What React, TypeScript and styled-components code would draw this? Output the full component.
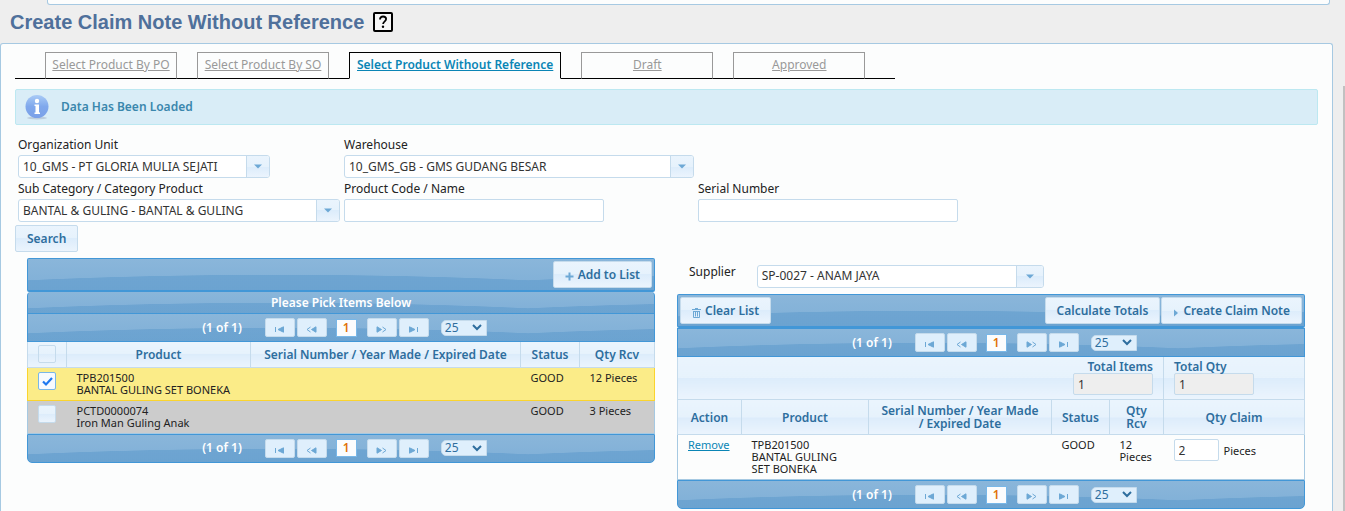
import React, { useState } from "react";
import styled, { createGlobalStyle, css } from "styled-components";

const Global = createGlobalStyle`
  *, *::before, *::after { box-sizing: border-box; }
  html { background: #eeeeee; }
  body {
    margin: 0;
    background: #eeeeee;
    color: #222222;
    font-family: "Noto Sans", "Open Sans", sans-serif;
    font-size: 12px;
    line-height: 16px;
  }
  button, input, select { font: inherit; color: inherit; margin: 0; }
`;

const glass = css`
  background: linear-gradient(#eaf4fd 0, #e6f2fc 50%, #dcecfb 50%, #ebf4fd 100%);
`;

const wave = css`
  background:
    radial-gradient(ellipse 600px 60px at 250px calc(50% + 60px), rgba(84, 148, 200, 0.45) 99%, transparent 100%) 0 0 / 500px 100%,
    linear-gradient(#8ab6da, #7fafd7);
`;

const Shell = styled.div`
  display: grid;
  grid-template-columns: minmax(0, 1fr) 2px;
  column-gap: 10px;
  min-height: 100vh;
`;

const Page = styled.div`
  display: flex;
  flex-direction: column;
`;

const ScrollTrack = styled.div`
  padding-top: 86px;
  display: flex;
  &::before { content: ""; flex: 1; background: #c1c1c1; }
`;

const MenuPanel = styled.div`
  height: 5px;
  margin: 0 3px 0 47px;
  background: #fcfdfd;
  border: 1px solid #a6c9e2;
  border-top: 0;
  border-radius: 0 0 3px 3px;
`;

const TitleBar = styled.header`
  display: flex;
  align-items: center;
  gap: 9px;
  height: 38px;
  padding: 0 10px 5px;
`;

const Title = styled.h1`
  margin: 0;
  font: bold 20px/24px "Liberation Sans", Arial, sans-serif;
  color: #4f709b;
`;

const Panel = styled.main`
  flex: 1;
  padding: 8px 14px 0;
  background: #fcfdfd;
  border: 1px solid #a6c9e2;
  border-bottom: 0;
  border-radius: 3px 3px 0 0;
`;

const Tabs = styled.nav`
  display: flex;
  gap: 20px;
  width: max-content;
  padding: 0 30px;
  box-shadow: inset 0 -1px #000000;
`;

const Tab = styled.a<{ $active?: boolean }>`
  min-width: 132px;
  height: 27px;
  padding: 4px ${(p) => (p.$active ? 7 : 6)}px;
  text-align: center;
  border: 1px solid ${(p) => (p.$active ? "#000000" : "#999999")};
  border-bottom-color: ${(p) => (p.$active ? "#fcfdfd" : "#000000")};
  color: ${(p) => (p.$active ? "#0a85b5" : "#999999")};
  font-weight: ${(p) => (p.$active ? 600 : 400)};
`;

const Message = styled.div`
  display: flex;
  align-items: center;
  gap: 12px;
  height: 36px;
  margin-top: 10px;
  padding: 0 9px;
  background: #d9edf7;
  border: 1px solid #bce8f1;
  border-radius: 2px;
  color: #3a87ad;
  font-weight: 600;
`;

const Filters = styled.form`
  margin-top: 10px;
`;

const FilterGrid = styled.div`
  display: grid;
  grid-template-columns: 322px 350px 260px;
  column-gap: 4px;
  margin-bottom: 2px;
  padding-left: 3px;
`;

const Field = styled.div`
  display: flex;
  flex-direction: column;
  padding-bottom: 1px;
  label { line-height: 20px; }
`;

const TextBox = styled.input<{ $w: number }>`
  width: ${(p) => p.$w}px;
  height: 23px;
  padding: 0 4px;
  background: #ffffff;
  border: 1px solid #c5dbec;
  border-radius: 2px;
  color: #333333;
  &:read-only { background: #eeeeee; }
`;

const Combo = styled.span<{ $w: number }>`
  display: flex;
  width: ${(p) => p.$w}px;
  height: 23px;
  border: 1px solid #c5dbec;
  border-radius: 3px;
  background: #ffffff;
  overflow: hidden;
  select {
    flex: 1;
    min-width: 0;
    padding: 0 4px;
    appearance: none;
    border: 0;
    background: transparent;
    color: #333333;
  }
`;

const ComboTrigger = styled.span<{ $wide?: boolean }>`
  display: grid;
  place-items: center;
  width: ${(p) => (p.$wide ? 27 : 23)}px;
  border-left: 1px solid #c5dbec;
  ${glass}
`;

const Button = styled.button`
  display: inline-flex;
  align-items: center;
  gap: 4px;
  height: 27px;
  padding: 0 11px;
  border: 1px solid #c5dbec;
  border-radius: 2px;
  color: #2e6e9e;
  font-weight: 600;
  white-space: nowrap;
  ${glass}
  svg { margin-top: 4px; }
`;

const Columns = styled.div`
  display: grid;
  grid-template-columns: 1fr 1fr;
  column-gap: 22px;
  align-items: start;
  margin: 6px 13px 0 12px;
`;

const Toolbar = styled.div`
  display: flex;
  align-items: center;
  gap: 1px;
  height: 34px;
  padding: 0 2px;
  border: 1px solid #4297d7;
  border-bottom-width: 2px;
  border-radius: 2px;
  ${wave}
`;

const Spacer = styled.span`
  flex: 1;
`;

const Caption = styled.div`
  height: 21px;
  line-height: 21px;
  border: 1px solid #4297d7;
  border-width: 0 1px;
  border-radius: 4px 4px 0 0;
  color: #ffffff;
  font-weight: 600;
  text-align: center;
  ${wave}
`;

const PagerBar = styled.div<{ $foot?: boolean }>`
  display: flex;
  align-items: center;
  justify-content: center;
  height: 29px;
  padding-left: 7px;
  border: 1px solid #4297d7;
  border-radius: ${(p) => (p.$foot ? "0 0 5px 5px" : "0")};
  color: #ffffff;
  font-weight: 600;
  ${wave}
`;

const PagerStatus = styled.span`
  margin-right: 23px;
`;

const PagerButton = styled.button`
  display: grid;
  place-items: end center;
  width: 30px;
  height: 19px;
  margin-right: 2px;
  padding: 0 0 3px;
  background: #dfeffc;
  border: 1px solid #c5dbec;
  border-radius: 2px;
`;

const PagerPage = styled.button`
  width: 21px;
  height: 18px;
  margin: 0 10px 0 7px;
  padding: 0;
  line-height: 16px;
  background: #fbfcfd;
  border: 1px solid #79b7e7;
  color: #e17009;
  font-weight: 600;
`;

const PagerSize = styled.span`
  display: flex;
  align-items: center;
  width: 46px;
  height: 16px;
  margin-left: 10px;
  padding-right: 4px;
  background: #dfeffc;
  border: 1px solid #c5dbec;
  border-radius: 5px 0 0 5px;
  color: #2e6e9e;
  font-weight: 400;
  select {
    flex: 1;
    min-width: 0;
    height: 14px;
    padding: 0 3px;
    line-height: 14px;
    appearance: none;
    border: 0;
    background: transparent;
  }
`;

const Table = styled.table`
  width: 100%;
  table-layout: fixed;
  border-collapse: collapse;
  line-height: 12px;
  font-size: 11px;
`;

const Th = styled.th<{ $h: number }>`
  height: ${(p) => p.$h}px;
  padding: 0 10px;
  border: 1px solid #c5dbec;
  border-top: 0;
  color: #2e6e9e;
  font-size: 12px;
  font-weight: 600;
  line-height: 13px;
  ${glass}
`;

const TotalTh = styled(Th)`
  padding: 3px 10px 4px;
  text-align: ${(p) => p.align};
  label { display: block; line-height: 13px; }
  input {
    display: block;
    height: 22px;
    margin-left: ${(p) => (p.align === "right" ? "auto" : "0")};
    font-weight: 400;
  }
`;

const Row = styled.tr<{ $tone: "selected" | "gray" | "plain" }>`
  background: ${(p) => ({ selected: "#fbec88", gray: "#cccccc", plain: "#fcfdfd" })[p.$tone]};
  border: 1px solid ${(p) => (p.$tone === "selected" ? "#fad42e" : "#a6c9e2")};
  td { height: 33px; padding: 4px 10px; vertical-align: top; }
`;

const CheckCell = styled.td`
  && { padding: 4px 0 0; text-align: center; }
`;

const ProductCell = styled.td`
  && { padding-right: 20px; }
`;

const Check = styled.input`
  display: block;
  width: 18px;
  height: 18px;
  margin: 0 auto;
  appearance: none;
  border: 1px solid #c5dbec;
  border-radius: 2px;
  ${glass}
  &:checked {
    border-color: #79b7e7;
    background: #f7fafe url("data:image/svg+xml,%3Csvg xmlns='http://www.w3.org/2000/svg' viewBox='0 0 16 16'%3E%3Cpath d='M4 8.5l3 3L13 5' fill='none' stroke='%231d78f0' stroke-width='2.2'/%3E%3C/svg%3E");
  }
`;

const Remove = styled.a`
  color: #0a85b5;
`;

const ClaimCell = styled.td`
  label { padding-left: 5px; }
  input { height: 22px; font-size: 12px; }
`;

const SupplierRow = styled.div`
  display: flex;
  align-items: center;
  gap: 21px;
  height: 36px;
  padding-left: 12px;
  label { padding-bottom: 8px; }
`;

const Down = () => (
  <svg width="8" height="5" viewBox="0 0 8 5" aria-hidden="true">
    <path d="M0 0.5h8L4 4.5z" fill="#6da8d5" />
  </svg>
);

const HelpIcon = () => (
  <svg width="20" height="20" viewBox="0 0 20 20" role="img" aria-label="Help">
    <rect x="1" y="1" width="18" height="18" rx="1" fill="#f7f7f7" stroke="#000" strokeWidth="2" />
    <path d="M7 7.4C7 5.4 8.3 4.5 10 4.5s3.100 1 3.100 2.600c0 2.100-3 2.400-3 5" fill="none" stroke="#000" strokeWidth="1.800" />
    <circle cx="10" cy="14.700" r="1.200" />
  </svg>
);

const InfoIcon = () => (
  <svg width="24" height="26" viewBox="0 0 24 26" aria-hidden="true">
    <defs>
      <linearGradient id="info" x1="0" y1="0" x2="0" y2="1">
        <stop offset="0" stopColor="#a9cbf6" />
        <stop offset="0.5" stopColor="#7fa8ec" />
        <stop offset="1" stopColor="#7ba0e8" />
      </linearGradient>
    </defs>
    <ellipse cx="12" cy="24" rx="10" ry="1.500" fill="#bccddd" />
    <circle cx="12" cy="12.500" r="11.500" fill="url(#info)" />
    <circle cx="12" cy="7" r="2.200" fill="#fff" />
    <path d="M9.500 10.500h4.500v8h1v1.500H9.500v-1.500h1v-6.500h-1z" fill="#fff" />
  </svg>
);

const TrashIcon = () => (
  <svg width="9" height="10" viewBox="0 0 9 10" fill="none" stroke="#6da8d5" aria-hidden="true">
    <path d="M0 1.500h9M3 0.500h3M1.500 3v6.500h6V3M3.500 3.500v5M5.500 3.500v5M1 3.500h7" />
  </svg>
);

const PlusIcon = () => (
  <svg width="9" height="9" viewBox="0 0 9 9" aria-hidden="true">
    <path d="M4.500 0.500v8M0.500 4.500h8" stroke="#6da8d5" strokeWidth="2" />
  </svg>
);

const RightIcon = () => (
  <svg width="6" height="8" viewBox="0 0 6 8" aria-hidden="true">
    <path d="M1 0.500L5 4 1 7.500z" fill="#6da8d5" />
  </svg>
);

const pagerPaths = {
  first: <><path d="M1.500 1v5" /><path d="M9.500 0.800v5.400L4 3.500z" fill="#6da8d5" /></>,
  prev: <><path d="M4.500 1L1 3.500 4.500 6" /><path d="M10 0.800v5.400L5.500 3.500z" fill="#6da8d5" /></>,
  next: <><path d="M6.500 1L10 3.500 6.500 6" /><path d="M1 0.800v5.400L5.500 3.500z" fill="#6da8d5" /></>,
  last: <><path d="M9.500 1v5" /><path d="M1.500 0.800v5.400L7 3.500z" fill="#6da8d5" /></>,
};

const PagerIcon = ({ kind }: { kind: keyof typeof pagerPaths }) => (
  <svg width="11" height="7" viewBox="0 0 11 7" fill="none" stroke="#6da8d5" aria-hidden="true">
    {pagerPaths[kind]}
  </svg>
);

const Pager = ({ foot }: { foot?: boolean }) => (
  <PagerBar $foot={foot}>
    <PagerStatus>(1 of 1)</PagerStatus>
    <PagerButton aria-label="First page"><PagerIcon kind="first" /></PagerButton>
    <PagerButton aria-label="Previous page"><PagerIcon kind="prev" /></PagerButton>
    <PagerPage>1</PagerPage>
    <PagerButton aria-label="Next page"><PagerIcon kind="next" /></PagerButton>
    <PagerButton aria-label="Last page"><PagerIcon kind="last" /></PagerButton>
    <PagerSize>
      <select aria-label="Rows per page"><option>25</option></select>
      <svg width="10" height="7" viewBox="0 0 10 7" aria-hidden="true">
        <path d="M1 1l4 4 4-4" fill="none" stroke="#2e6e9e" strokeWidth="2" />
      </svg>
    </PagerSize>
  </PagerBar>
);

const Select = ({ id, value, width, wide }: { id: string; value: string; width: number; wide?: boolean }) => (
  <Combo $w={width}>
    <select id={id}><option>{value}</option></select>
    <ComboTrigger $wide={wide}><Down /></ComboTrigger>
  </Combo>
);

const tabs = ["Select Product By PO", "Select Product By SO", "Select Product Without Reference", "Draft", "Approved"];

export default function App() {
  const [picked, setPicked] = useState([true, false]);
  const items = [
    { code: "TPB201500", name: "BANTAL GULING SET BONEKA", qty: "12 Pieces" },
    { code: "PCTD0000074", name: "Iron Man Guling Anak", qty: "3 Pieces" },
  ];
  return (
    <Shell>
      <Global />
      <Page>
        <MenuPanel />
        <TitleBar>
          <Title>Create Claim Note Without Reference</Title>
          <HelpIcon />
        </TitleBar>
        <Panel>
          <Tabs>
            {tabs.map((t, i) => <Tab key={t} href="#" $active={i === 2}>{t}</Tab>)}
          </Tabs>
          <Message role="status"><InfoIcon />Data Has Been Loaded</Message>
          <Filters onSubmit={(e) => e.preventDefault()}>
            <FilterGrid>
              <Field>
                <label htmlFor="org">Organization Unit</label>
                <Select id="org" value="10_GMS - PT GLORIA MULIA SEJATI" width={252} />
              </Field>
              <Field>
                <label htmlFor="warehouse">Warehouse</label>
                <Select id="warehouse" value="10_GMS_GB - GMS GUDANG BESAR" width={350} />
              </Field>
              <span />
              <Field>
                <label htmlFor="category">Sub Category / Category Product</label>
                <Select id="category" value="BANTAL & GULING - BANTAL & GULING" width={322} />
              </Field>
              <Field>
                <label htmlFor="product">Product Code / Name</label>
                <TextBox id="product" $w={260} />
              </Field>
              <Field>
                <label htmlFor="serial">Serial Number</label>
                <TextBox id="serial" $w={260} />
              </Field>
            </FilterGrid>
            <Button type="submit">Search</Button>
          </Filters>
          <Columns>
            <section>
              <Toolbar>
                <Spacer />
                <Button><PlusIcon />Add to List</Button>
              </Toolbar>
              <Caption>Please Pick Items Below</Caption>
              <Pager />
              <Table>
                <colgroup>
                  <col width="39" /><col width="184" /><col /><col width="59" /><col width="75" />
                </colgroup>
                <thead>
                  <tr>
                    <Th $h={25}>
                      <Check
                        type="checkbox"
                        aria-label="Select all"
                        checked={picked.every(Boolean)}
                        onChange={(e) => setPicked(picked.map(() => e.target.checked))}
                      />
                    </Th>
                    <Th $h={25}>Product</Th>
                    <Th $h={25}>Serial Number / Year Made / Expired Date</Th>
                    <Th $h={25}>Status</Th>
                    <Th $h={25}>Qty Rcv</Th>
                  </tr>
                </thead>
                <tbody>
                  {items.map((item, i) => (
                    <Row key={item.code} $tone={picked[i] ? "selected" : "gray"}>
                      <CheckCell>
                        <Check
                          type="checkbox"
                          aria-label={item.name}
                          checked={picked[i]}
                          onChange={() => setPicked(picked.map((v, n) => (n === i ? !v : v)))}
                        />
                      </CheckCell>
                      <td>{item.code}<br />{item.name}</td>
                      <td />
                      <td>GOOD</td>
                      <td>{item.qty}</td>
                    </Row>
                  ))}
                </tbody>
              </Table>
              <Pager foot />
            </section>
            <section>
              <SupplierRow>
                <label htmlFor="supplier">Supplier</label>
                <Select id="supplier" value="SP-0027 - ANAM JAYA" width={287} wide />
              </SupplierRow>
              <Toolbar>
                <Button><TrashIcon />Clear List</Button>
                <Spacer />
                <Button>Calculate Totals</Button>
                <Button><RightIcon />Create Claim Note</Button>
              </Toolbar>
              <Pager />
              <Table>
                <colgroup>
                  <col width="64" /><col width="127" /><col /><col width="58" /><col width="54" /><col width="141" />
                </colgroup>
                <thead>
                  <tr>
                    <TotalTh $h={42} colSpan={5} align="right">
                      <label htmlFor="totalItems">Total Items</label>
                      <TextBox id="totalItems" $w={80} readOnly value="1" />
                    </TotalTh>
                    <TotalTh $h={42} align="left">
                      <label htmlFor="totalQty">Total Qty</label>
                      <TextBox id="totalQty" $w={80} readOnly value="1" />
                    </TotalTh>
                  </tr>
                  <tr>
                    <Th $h={35}>Action</Th>
                    <Th $h={35}>Product</Th>
                    <Th $h={35}>Serial Number / Year Made / Expired Date</Th>
                    <Th $h={35}>Status</Th>
                    <Th $h={35}>Qty Rcv</Th>
                    <Th $h={35}>Qty Claim</Th>
                  </tr>
                </thead>
                <tbody>
                  <Row $tone="plain">
                    <td><Remove href="#">Remove</Remove></td>
                    <ProductCell>TPB201500<br />BANTAL GULING SET BONEKA</ProductCell>
                    <td />
                    <td>GOOD</td>
                    <td>12 Pieces</td>
                    <ClaimCell>
                      <TextBox id="claim" $w={45} defaultValue="2" />
                      <label htmlFor="claim">Pieces</label>
                    </ClaimCell>
                  </Row>
                </tbody>
              </Table>
              <Pager foot />
            </section>
          </Columns>
        </Panel>
      </Page>
      <ScrollTrack />
    </Shell>
  );
}
